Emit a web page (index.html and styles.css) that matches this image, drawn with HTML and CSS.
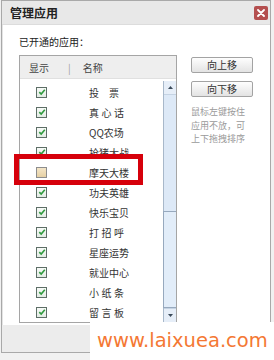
FILE: index.html
```html
<!DOCTYPE html>
<html lang="zh-CN">
<head>
<meta charset="utf-8">
<title>管理应用</title>
<link rel="stylesheet" href="styles.css">
</head>
<body>
<div class="dialog">
  <div class="titlebar">
    <span class="title">管理应用</span>
    <span class="close"><svg width="8" height="8" viewBox="0 0 8 8"><path d="M1 1L7 7M7 1L1 7" stroke="#fff" stroke-width="1.8" stroke-linecap="round"/></svg></span>
  </div>
  <div class="main">
    <div class="label">已开通的应用：</div>
    <div class="content">
      <div class="listbox">
        <div class="lhead"><span class="hshow">显示</span><span class="hsep">|</span><span class="hname">名称</span></div>
        <div class="lbody">
          <div class="rows">
            <div class="row"><span class="cb on"><svg width="8" height="8" viewBox="0 0 8 8"><path d="M1.3 4.2L3.2 6L6.8 1.8" fill="none" stroke="#2f9a3e" stroke-width="1.6"/></svg></span><span class="nm sp2">投票</span></div>
            <div class="row"><span class="cb on"><svg width="8" height="8" viewBox="0 0 8 8"><path d="M1.3 4.2L3.2 6L6.8 1.8" fill="none" stroke="#2f9a3e" stroke-width="1.6"/></svg></span><span class="nm sp3">真心话</span></div>
            <div class="row"><span class="cb on"><svg width="8" height="8" viewBox="0 0 8 8"><path d="M1.3 4.2L3.2 6L6.8 1.8" fill="none" stroke="#2f9a3e" stroke-width="1.6"/></svg></span><span class="nm">QQ农场</span></div>
            <div class="row"><span class="cb on"><svg width="8" height="8" viewBox="0 0 8 8"><path d="M1.3 4.2L3.2 6L6.8 1.8" fill="none" stroke="#2f9a3e" stroke-width="1.6"/></svg></span><span class="nm">抢猪大战</span></div>
            <div class="row"><span class="cb off"></span><span class="nm">摩天大楼</span></div>
            <div class="row"><span class="cb on"><svg width="8" height="8" viewBox="0 0 8 8"><path d="M1.3 4.2L3.2 6L6.8 1.8" fill="none" stroke="#2f9a3e" stroke-width="1.6"/></svg></span><span class="nm">功夫英雄</span></div>
            <div class="row"><span class="cb on"><svg width="8" height="8" viewBox="0 0 8 8"><path d="M1.3 4.2L3.2 6L6.8 1.8" fill="none" stroke="#2f9a3e" stroke-width="1.6"/></svg></span><span class="nm">快乐宝贝</span></div>
            <div class="row"><span class="cb on"><svg width="8" height="8" viewBox="0 0 8 8"><path d="M1.3 4.2L3.2 6L6.8 1.8" fill="none" stroke="#2f9a3e" stroke-width="1.6"/></svg></span><span class="nm sp3">打招呼</span></div>
            <div class="row"><span class="cb on"><svg width="8" height="8" viewBox="0 0 8 8"><path d="M1.3 4.2L3.2 6L6.8 1.8" fill="none" stroke="#2f9a3e" stroke-width="1.6"/></svg></span><span class="nm">星座运势</span></div>
            <div class="row"><span class="cb on"><svg width="8" height="8" viewBox="0 0 8 8"><path d="M1.3 4.2L3.2 6L6.8 1.8" fill="none" stroke="#2f9a3e" stroke-width="1.6"/></svg></span><span class="nm">就业中心</span></div>
            <div class="row"><span class="cb on"><svg width="8" height="8" viewBox="0 0 8 8"><path d="M1.3 4.2L3.2 6L6.8 1.8" fill="none" stroke="#2f9a3e" stroke-width="1.6"/></svg></span><span class="nm sp3">小纸条</span></div>
            <div class="row"><span class="cb on"><svg width="8" height="8" viewBox="0 0 8 8"><path d="M1.3 4.2L3.2 6L6.8 1.8" fill="none" stroke="#2f9a3e" stroke-width="1.6"/></svg></span><span class="nm sp3">留言板</span></div>
          </div>
          <div class="scrollbar">
            <div class="sbtn"><svg width="5" height="3" viewBox="0 0 5 3"><path d="M0 3L2.5 0L5 3Z" fill="#3a4a5a"/></svg></div>
            <div class="track"><div class="thumb"></div></div>
            <div class="sbtn down"><svg width="5" height="3" viewBox="0 0 5 3"><path d="M0 0L2.5 3L5 0Z" fill="#3a4a5a"/></svg></div>
          </div>
        </div>
      </div>
      <div class="side">
        <button class="btn">向上移</button>
        <button class="btn">向下移</button>
        <div class="hint">
          <span class="hl">鼠标左键按住</span>
          <span class="hl">应用不放，可</span>
          <span class="hl">上下拖拽排序</span>
        </div>
      </div>
    </div>
  </div>
  <div class="footer"></div>
</div>
<div class="highlight"></div>
<div class="watermark">www.laixuea.com</div>
</body>
</html>
```
FILE: styles.css
```css
html, body {
  margin: 0;
  padding: 0;
}
body {
  width: 274px;
  height: 360px;
  background: #f1f1f1;
  font-family: "Noto Sans CJK SC", "Noto Sans", sans-serif;
  color: #333;
  position: relative;
  overflow: hidden;
}
.dialog {
  margin-left: 1px;
  width: 268px;
  height: 351px;
  border: 1px solid #a9a9a9;
  display: flex;
  flex-direction: column;
  background: #fff;
}
.titlebar {
  height: 24px;
  background: #e8e8e8;
  display: flex;
  align-items: center;
  justify-content: space-between;
  padding-left: 8px;
  padding-right: 2px;
  border-bottom: 1px solid #dcdcdc;
  box-sizing: border-box;
}
.title {
  font-size: 12px;
  font-weight: bold;
  color: #222;
  line-height: 14px;
}
.close {
  width: 14px;
  height: 14px;
  background: #b44f4f;
  border-radius: 2px;
  display: flex;
  align-items: center;
  justify-content: center;
}
.main {
  height: 300px;
  box-sizing: border-box;
  padding: 10px 0 0 16px;
  border-left: 1px solid #e4e4e4;
}
.label {
  font-size: 10px;
  line-height: 14px;
  height: 14px;
  margin-bottom: 6px;
  color: #222;
}
.content {
  display: flex;
  gap: 14px;
}
.listbox {
  width: 158px;
  height: 268px;
  box-sizing: border-box;
  border: 1px solid #a5a5a5;
  display: flex;
  flex-direction: column;
}
.lhead {
  height: 22px;
  background: #eeeeee;
  border-bottom: 1px solid #e0e0e0;
  display: flex;
  align-items: center;
  font-size: 10px;
  color: #444;
  flex-shrink: 0;
}
.hshow { margin-left: 9px; }
.hsep { margin-left: 19px; color: #a0a0a0; }
.hname { margin-left: 12px; }
.lbody {
  flex: 1;
  display: flex;
  min-height: 0;
}
.rows {
  flex: 1;
  padding-top: 3px;
}
.row {
  height: 20px;
  display: flex;
  align-items: center;
}
.cb {
  width: 11px;
  height: 11px;
  box-sizing: border-box;
  margin-left: 16px;
  border: 1px solid #5d6e66;
  background: linear-gradient(#f8faf8, #e3ebe4);
  display: flex;
  align-items: center;
  justify-content: center;
  flex-shrink: 0;
}
.cb.off {
  border-color: #8d8d8d;
  background: linear-gradient(#f4e6c8, #e6d0a4);
}
.nm {
  margin-left: 42px;
  font-size: 10px;
  color: #333;
  white-space: nowrap;
}
.nm.sp2 { letter-spacing: 10px; }
.nm.sp3 { letter-spacing: 2.5px; }
.scrollbar {
  width: 13px;
  box-sizing: border-box;
  border-left: 1px solid #a8b8ca;
  background: #dde9f7;
  display: flex;
  flex-direction: column;
  margin-top: 2px;
}
.sbtn {
  height: 14px;
  flex-shrink: 0;
  display: flex;
  align-items: center;
  justify-content: center;
  border-bottom: 1px solid #c5d3e3;
  box-sizing: border-box;
  background: #e6eef8;
}
.sbtn.down {
  border-bottom: 0;
  border-top: 1px solid #c5d3e3;
}
.track {
  flex: 1;
  display: flex;
  flex-direction: column;
  justify-content: flex-end;
}
.thumb {
  height: 95px;
  border: 1px solid #97a9be;
  border-right: 0;
  background: #e2edf9;
  margin-left: -1px;
}
.side {
  display: flex;
  flex-direction: column;
  align-items: flex-start;
  padding-top: 2px;
}
.btn {
  width: 62px;
  height: 16px;
  padding: 0;
  border: 1px solid #a3a3a3;
  border-radius: 2px;
  background: linear-gradient(#fefefe, #e3e3e3);
  font-family: "Noto Sans CJK SC", sans-serif;
  font-size: 10px;
  line-height: 14px;
  color: #333;
}
.btn + .btn { margin-top: 8px; }
.hint {
  margin-top: 8px;
  display: flex;
  flex-direction: column;
}
.hl {
  display: block;
  font-size: 9px;
  line-height: 13.5px;
  color: #9a9a9a;
  white-space: nowrap;
}
.footer {
  flex: 1;
  background: #ececec;
}
.highlight {
  position: absolute;
  left: 14px;
  top: 154px;
  width: 129px;
  height: 31px;
  box-sizing: border-box;
  border: 5px solid #d6000b;
}
.watermark {
  position: absolute;
  left: 90px;
  top: 322px;
  right: 0;
  bottom: 0;
  background: #fff;
  padding-left: 7px;
  font-family: "DejaVu Sans", sans-serif;
  font-size: 19.5px;
  line-height: 38px;
  color: #f47833;
  white-space: nowrap;
}
```
